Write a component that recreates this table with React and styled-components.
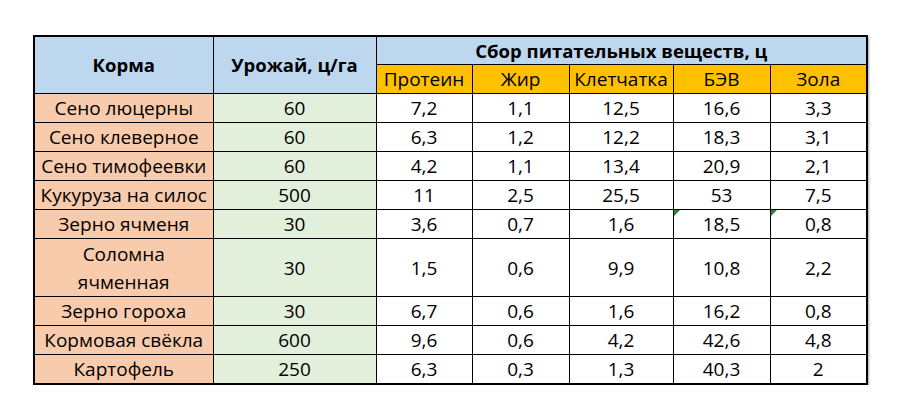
import styled, { createGlobalStyle } from 'styled-components';

const GlobalStyle = createGlobalStyle`
  body {
    margin: 0;
    background: #ffffff;
    font-family: 'Open Sans', 'Noto Sans', sans-serif;
  }
`;

const Page = styled.div`
  padding: 35px 0 0 33px;
`;

const Table = styled.table`
  border-collapse: collapse;
  table-layout: fixed;
  width: 833px;
  border: 2px solid #000;
  box-shadow: 1px 2px 2px rgba(0, 0, 0, 0.35);
  font-size: 19px;
  color: #000;
`;

const HeadCell = styled.th`
  border: 1px solid #000;
  background: ${({ $tone }) => ($tone === 'orange' ? '#ffc000' : '#bdd7ee')};
  font-weight: ${({ $tone }) => ($tone === 'orange' ? 400 : 700)};
  font-size: ${({ $tone }) => ($tone === 'orange' ? 19 : 18.5)}px;
  height: ${({ $h }) => $h}px;
  padding: 0;
  text-align: center;
  vertical-align: middle;
  line-height: 20px;
  white-space: nowrap;
`;

const Cell = styled.td`
  border: 1px solid #000;
  background: ${({ $tone }) =>
    $tone === 'peach' ? '#f8cbad' : $tone === 'green' ? '#e2efda' : '#ffffff'};
  height: ${({ $tall }) => ($tall ? 57 : 28)}px;
  padding: 0 1px;
  text-align: center;
  vertical-align: middle;
  line-height: 28px;
  position: relative;
  white-space: ${({ $wrap }) => ($wrap ? 'normal' : 'nowrap')};
`;

// excel "number stored as text" marker
const Flag = styled.span`
  position: absolute;
  top: 0;
  left: 0;
  width: 0;
  height: 0;
  border-top: 6px solid #1e8a2e;
  border-right: 6px solid transparent;
`;

const rows = [
  ['Сено люцерны', '60', '7,2', '1,1', '12,5', '16,6', '3,3'],
  ['Сено клеверное', '60', '6,3', '1,2', '12,2', '18,3', '3,1'],
  ['Сено тимофеевки', '60', '4,2', '1,1', '13,4', '20,9', '2,1'],
  ['Кукуруза на силос', '500', '11', '2,5', '25,5', '53', '7,5'],
  ['Зерно ячменя', '30', '3,6', '0,7', '1,6', '18,5', '0,8', true],
  ['Соломна ячменная', '30', '1,5', '0,6', '9,9', '10,8', '2,2', false, true],
  ['Зерно гороха', '30', '6,7', '0,6', '1,6', '16,2', '0,8'],
  ['Кормовая свёкла', '600', '9,6', '0,6', '4,2', '42,6', '4,8'],
  ['Картофель', '250', '6,3', '0,3', '1,3', '40,3', '2'],
];

const widths = [179, 163, 96, 97, 104, 97, 97];

export default function App() {
  return (
    <Page>
      <GlobalStyle />
      <Table>
        <colgroup>
          {widths.map((w, i) => (
            <col key={i} style={{ width: w }} />
          ))}
        </colgroup>
        <thead>
          <tr>
            <HeadCell rowSpan={2} $h={28}>Корма</HeadCell>
            <HeadCell rowSpan={2} $h={28}>Урожай, ц/га</HeadCell>
            <HeadCell colSpan={5} $h={27}>Сбор питательных веществ, ц</HeadCell>
          </tr>
          <tr>
            {['Протеин', 'Жир', 'Клетчатка', 'БЭВ', 'Зола'].map((t) => (
              <HeadCell key={t} $tone="orange" $h={28}>{t}</HeadCell>
            ))}
          </tr>
        </thead>
        <tbody>
          {rows.map(([name, crop, p, f, c, b, z, flag, tall]) => (
            <tr key={name}>
              <Cell $tone="peach" $tall={tall} $wrap={tall}>
                {tall ? <>Соломна<br />ячменная</> : name}
              </Cell>
              <Cell $tone="green" $tall={tall}>{crop}</Cell>
              <Cell $tall={tall}>{p}</Cell>
              <Cell $tall={tall}>{f}</Cell>
              <Cell $tall={tall}>{c}</Cell>
              <Cell $tall={tall}>
                {flag && <Flag />}
                {b}
              </Cell>
              <Cell $tall={tall}>
                {flag && <Flag />}
                {z}
              </Cell>
            </tr>
          ))}
        </tbody>
      </Table>
    </Page>
  );
}
